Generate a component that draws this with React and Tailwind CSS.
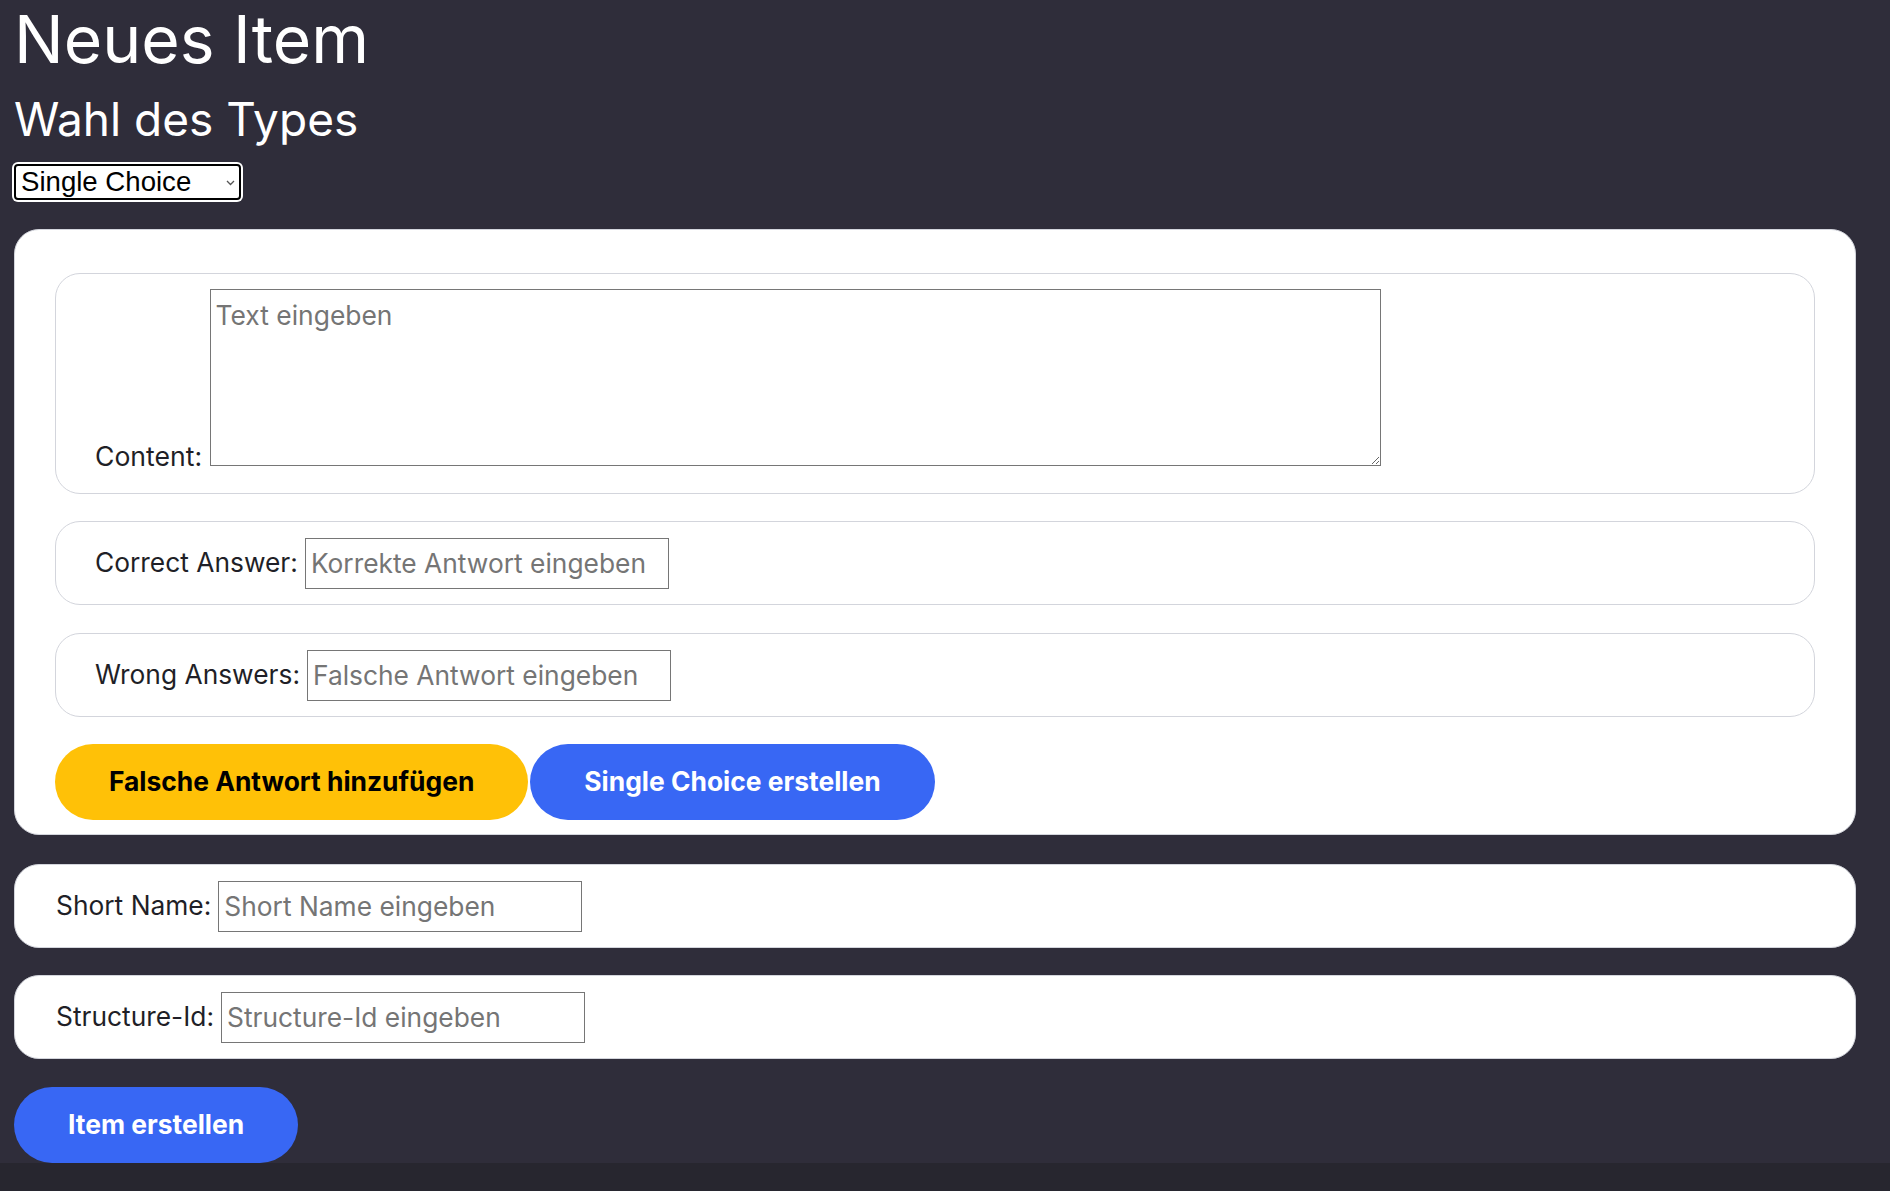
import React, { useState } from 'react';

// --- KONSTANTEN ---
const FONT = { fontFamily: 'Inter, "Noto Sans", sans-serif' };

// --- SUB-COMPONENT: ZEILE MIT LABEL + INPUT ---
const FieldRow = ({ label, placeholder, outer }) => (
  <div
    className={`flex items-center h-[84px] border border-[#d3d5dc] bg-white rounded-[25px] ${outer ? 'pl-[41px]' : 'pl-[39px]'}`}
  >
    <label className="text-[26.35px] text-[#1f1f27] whitespace-nowrap">{label}</label>
    <input
      type="text"
      placeholder={placeholder}
      className="ml-[7px] w-[364px] h-[51px] px-[5px] border border-[#767676] text-[26.35px] text-[#1f1f27] placeholder:text-[#757575] bg-white"
    />
  </div>
);

// --- COMPONENT UTAMA ---
export default function App() {
  const [type, setType] = useState('single');

  return (
    <div className="min-h-screen bg-[#27262f]" style={FONT}>
      <div className="bg-[#2f2d3a] pl-[14px] pr-[34px]">
        <h1 className="text-[66px] leading-[80px] text-white font-normal -mt-[1px]">Neues Item</h1>
        <h2 className="mt-[12px] text-[46px] leading-[56px] text-white font-normal">Wahl des Types</h2>

        {/* Typ-Auswahl */}
        <div className="mt-[17px] relative w-[227px]">
          <select
            value={type}
            onChange={(e) => setType(e.target.value)}
            className="appearance-none block w-[227px] h-[36px] pl-[5px] pr-[20px] bg-white text-black border-2 border-black rounded-[4px] ring-2 ring-white text-[27.6px] leading-[30px]"
            style={{ fontFamily: '"Liberation Sans", Arial, sans-serif' }}
          >
            <option value="single">Single Choice</option>
            <option value="multi">Multiple Choice</option>
            <option value="free">Freitext</option>
          </select>
          <svg className="absolute right-[6px] top-[16px] pointer-events-none" width="9" height="6" viewBox="0 0 9 6">
            <path d="M1 1l3.5 3.5L8 1" fill="none" stroke="#555" strokeWidth="1.3" />
          </svg>
        </div>

        {/* Formular-Karte */}
        <div className="mt-[29px] bg-white border border-[#d3d5dc] rounded-[25px] px-[40px] pt-[43px] pb-[14px]">
          <div className="border border-[#d3d5dc] rounded-[25px] pl-[39px] pt-[15px] pb-[17px] text-[26.6px] leading-[40px] text-[#1f1f27]">
            <label>Content:</label>{' '}
            <textarea
              placeholder="Text eingeben"
              className="align-baseline w-[1171px] h-[177px] px-[5px] pt-[9px] border border-[#767676] text-[26.4px] leading-[32px] placeholder:text-[#757575] resize-y"
            />
          </div>

          <div className="mt-[27px]">
            <FieldRow label="Correct Answer:" placeholder="Korrekte Antwort eingeben" />
          </div>
          <div className="mt-[28px]">
            <FieldRow label="Wrong Answers:" placeholder="Falsche Antwort eingeben" />
          </div>

          <div className="mt-[27px] flex gap-[2px]">
            <button className="h-[76px] px-[54px] rounded-full bg-[#ffc107] text-black text-[26.4px] font-bold">
              Falsche Antwort hinzufügen
            </button>
            <button className="h-[76px] px-[54px] rounded-full bg-[#3867f4] text-white text-[26.4px] font-bold">
              Single Choice erstellen
            </button>
          </div>
        </div>

        <div className="mt-[29px]">
          <FieldRow outer label="Short Name:" placeholder="Short Name eingeben" />
        </div>
        <div className="mt-[27px]">
          <FieldRow outer label="Structure-Id:" placeholder="Structure-Id eingeben" />
        </div>

        <div className="mt-[28px]">
          <button className="h-[76px] px-[54px] rounded-full bg-[#3867f4] text-white text-[26.4px] font-bold">
            Item erstellen
          </button>
        </div>
      </div>
    </div>
  );
}
